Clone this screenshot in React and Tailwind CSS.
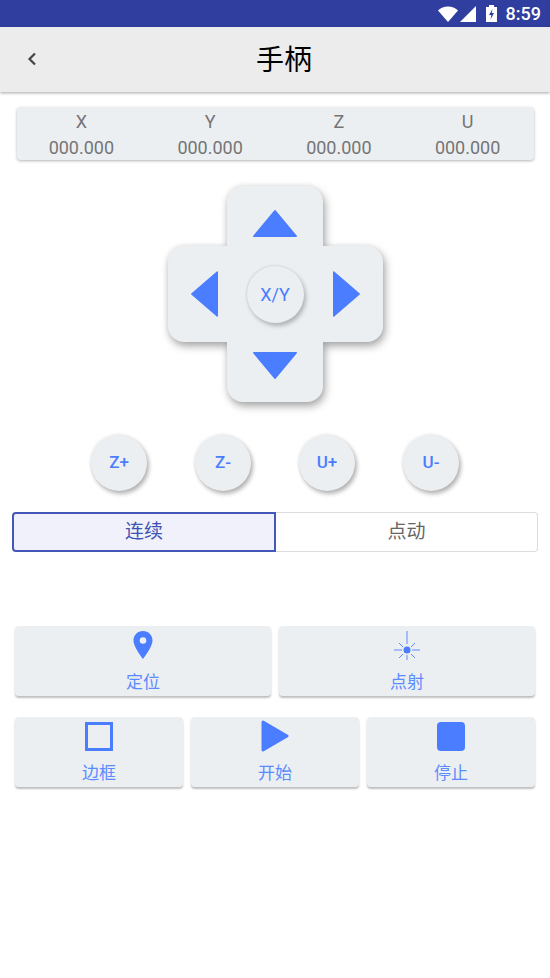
const cjk = "font-['Roboto','Noto_Sans_CJK_SC',sans-serif]"

const Triangle = ({ points, className }) => (
  <svg viewBox="0 0 48 48" className={className}>
    <polygon points={points} fill="#4a7dff" stroke="#4a7dff" strokeWidth="1.5" strokeLinejoin="round" />
  </svg>
)

const RoundButton = ({ label }) => (
  <button className="w-[56px] h-[56px] rounded-full bg-[#eceff1] text-[#4a7dff] text-[17px] font-medium flex items-center justify-center shadow-[2px_3px_4px_rgba(0,0,0,0.3),-1px_-1px_3px_rgba(0,0,0,0.08)]">
    {label}
  </button>
)

const ActionButton = ({ icon, label, className }) => (
  <button className={`h-[70px] rounded bg-[#eceff1] shadow-[0_2px_2px_rgba(0,0,0,0.25)] flex flex-col items-center pt-[2px] ${className}`}>
    <div className="h-[34px] flex items-center justify-center">{icon}</div>
    <span className="mt-[9px] text-[17px] leading-[22px] text-[#5c8bff]">{label}</span>
  </button>
)

const axes = ['X', 'Y', 'Z', 'U']

export default function App() {
  return (
    <div className={`w-[550px] h-[978px] bg-white overflow-hidden ${cjk}`}>
      {/* status bar */}
      <div className="h-[27px] bg-[#303f9f] flex items-center justify-end pr-[9px] text-white">
        <svg viewBox="0 0 20 16" className="w-[20px] h-[16px] mr-[2px]">
          <path d="M0 4.5C2.8 2 6.2 0.6 10 0.6S17.2 2 20 4.5L10 16z" fill="#fff" />
        </svg>
        <svg viewBox="0 0 16 16" className="w-[16px] h-[16px] mr-[10px]">
          <path d="M0 16L16 0v16z" fill="#fff" />
        </svg>
        <svg viewBox="0 0 11 17" className="w-[11px] h-[17px] mr-[9px]">
          <path d="M3 0h5v2h3v15H0V2h3z" fill="#fff" />
          <path d="M6.5 4L3 10h2.3L4.500 14.500 8 8H5.700z" fill="#303f9f" />
        </svg>
        <span className="text-[18px] font-medium leading-none">8:59</span>
      </div>

      {/* header */}
      <div className="h-[65px] bg-[#ececec] shadow-[0_1px_3px_rgba(0,0,0,0.35)] flex items-center pl-6 pr-[22px]">
        <svg viewBox="0 0 16 16" className="w-4 h-4 -mt-[2px]">
          <path d="M11 2.500L5.500 8l5.500 5.500" fill="none" stroke="#444" strokeWidth="2.200" />
        </svg>
        <div className="flex-1 text-center text-[28px] leading-none text-black mt-[2px]">手柄</div>
      </div>

      {/* position readout */}
      <div className="mt-[15px] ml-[17px] mr-[16px] h-[53px] rounded bg-[#eceff1] shadow-[0_1px_3px_rgba(0,0,0,0.3)] grid grid-cols-4 pr-[2px] text-center text-[#757575] text-[18px] leading-[25px] pt-[2px]">
        {axes.map((a) => (
          <div key={a}>
            <div>{a}</div>
            <div className="mt-px">000.000</div>
          </div>
        ))}
      </div>

      {/* d-pad */}
      <div className="mt-[26px] ml-[167px] w-[216px] h-[216px] grid place-items-center">
        <div className="col-start-1 row-start-1 w-full h-full grid place-items-center [filter:drop-shadow(2px_4px_4px_rgba(0,0,0,0.35))_drop-shadow(-1px_-1px_2px_rgba(0,0,0,0.06))]">
          <div className="col-start-1 row-start-1 w-[96px] h-[216px] rounded-[16px] bg-[#eceff1]" />
          <div className="col-start-1 row-start-1 justify-self-end w-[215px] h-[96px] rounded-[16px] bg-[#eceff1]" />
        </div>
        <div className="relative col-start-1 row-start-1 w-full h-full grid grid-cols-3 grid-rows-3 place-items-center">
          <div className="col-start-2 row-start-1">
            <Triangle className="w-[48px] h-[48px]" points="24,12.750 2.750,38.250 45.250,38.250" />
          </div>
          <div className="col-start-1 row-start-2">
            <Triangle className="w-[48px] h-[48px]" points="12.750,24 38.250,2 38.250,46" />
          </div>
          <button className="col-start-2 row-start-2 w-[57px] h-[57px] rounded-full bg-[#eceff1] text-[#4a7dff] text-[18px] flex items-center justify-center shadow-[2px_3px_4px_rgba(0,0,0,0.25),-1px_-1px_2px_rgba(0,0,0,0.08)]">
            X/Y
          </button>
          <div className="col-start-3 row-start-2">
            <Triangle className="w-[48px] h-[48px]" points="36.250,24 10.750,2 10.750,46" />
          </div>
          <div className="col-start-2 row-start-3">
            <Triangle className="w-[48px] h-[48px]" points="24,36.250 2.750,10.750 45.250,10.750" />
          </div>
        </div>
      </div>

      {/* z / u jog */}
      <div className="mt-[33px] flex justify-center gap-[48px]">
        {['Z+', 'Z-', 'U+', 'U-'].map((l) => (
          <RoundButton key={l} label={l} />
        ))}
      </div>

      {/* mode switch */}
      <div className="mt-[21px] mx-[12px] h-[40px] flex text-[19px]">
        <div className="w-[264px] rounded-l bg-[#f0f1fa] border-2 border-[#4357b8] text-[#3f51b5] flex items-center justify-center">连续</div>
        <div className="flex-1 rounded-r border border-l-0 border-[#dddddd] text-[#666666] flex items-center justify-center">点动</div>
      </div>

      {/* actions */}
      <div className="mt-[74px] mx-[15px] flex gap-[8px]">
        <ActionButton
          className="flex-1"
          label="定位"
          icon={
            <svg viewBox="0 0 20 28" className="w-[20px] h-[28px]">
              <path fillRule="evenodd" d="M10 0C4.500 0 .5 4.200.5 9.500.5 16 10 28 10 28s9.500-12 9.500-18.500C19.500 4.200 15.500 0 10 0zm0 6.200a3.300 3.300 0 1 1 0 6.600 3.300 3.300 0 0 1 0-6.600z" fill="#4a7dff" />
            </svg>
          }
        />
        <ActionButton
          className="flex-1"
          label="点射"
          icon={
            <svg viewBox="0 0 28 32" className="w-[28px] h-[32px]">
              <g stroke="#5c8bff" strokeWidth="1" fill="none">
                <path d="M14 2v13M14 26v5M1 21h8M19 21h8M6 14l4 4M22 14l-4 4M6 29l4-4M22 29l-4-4" />
              </g>
              <circle cx="14" cy="21" r="3.500" fill="#4a7dff" />
            </svg>
          }
        />
      </div>
      <div className="mt-[21px] mx-[15px] flex gap-[8px]">
        <ActionButton
          className="flex-1"
          label="边框"
          icon={<div className="w-[28px] h-[29px] border-[3px] border-[#4a7dff]" />}
        />
        <ActionButton
          className="flex-1"
          label="开始"
          icon={
            <svg viewBox="0 0 28 34" className="w-[28px] h-[34px]">
              <path d="M2 3l24 14L2 31z" fill="#4a7dff" stroke="#4a7dff" strokeWidth="3" strokeLinejoin="round" />
            </svg>
          }
        />
        <ActionButton
          className="flex-1"
          label="停止"
          icon={<div className="w-[28px] h-[29px] rounded-[4px] bg-[#4a7dff]" />}
        />
      </div>
    </div>
  )
}
